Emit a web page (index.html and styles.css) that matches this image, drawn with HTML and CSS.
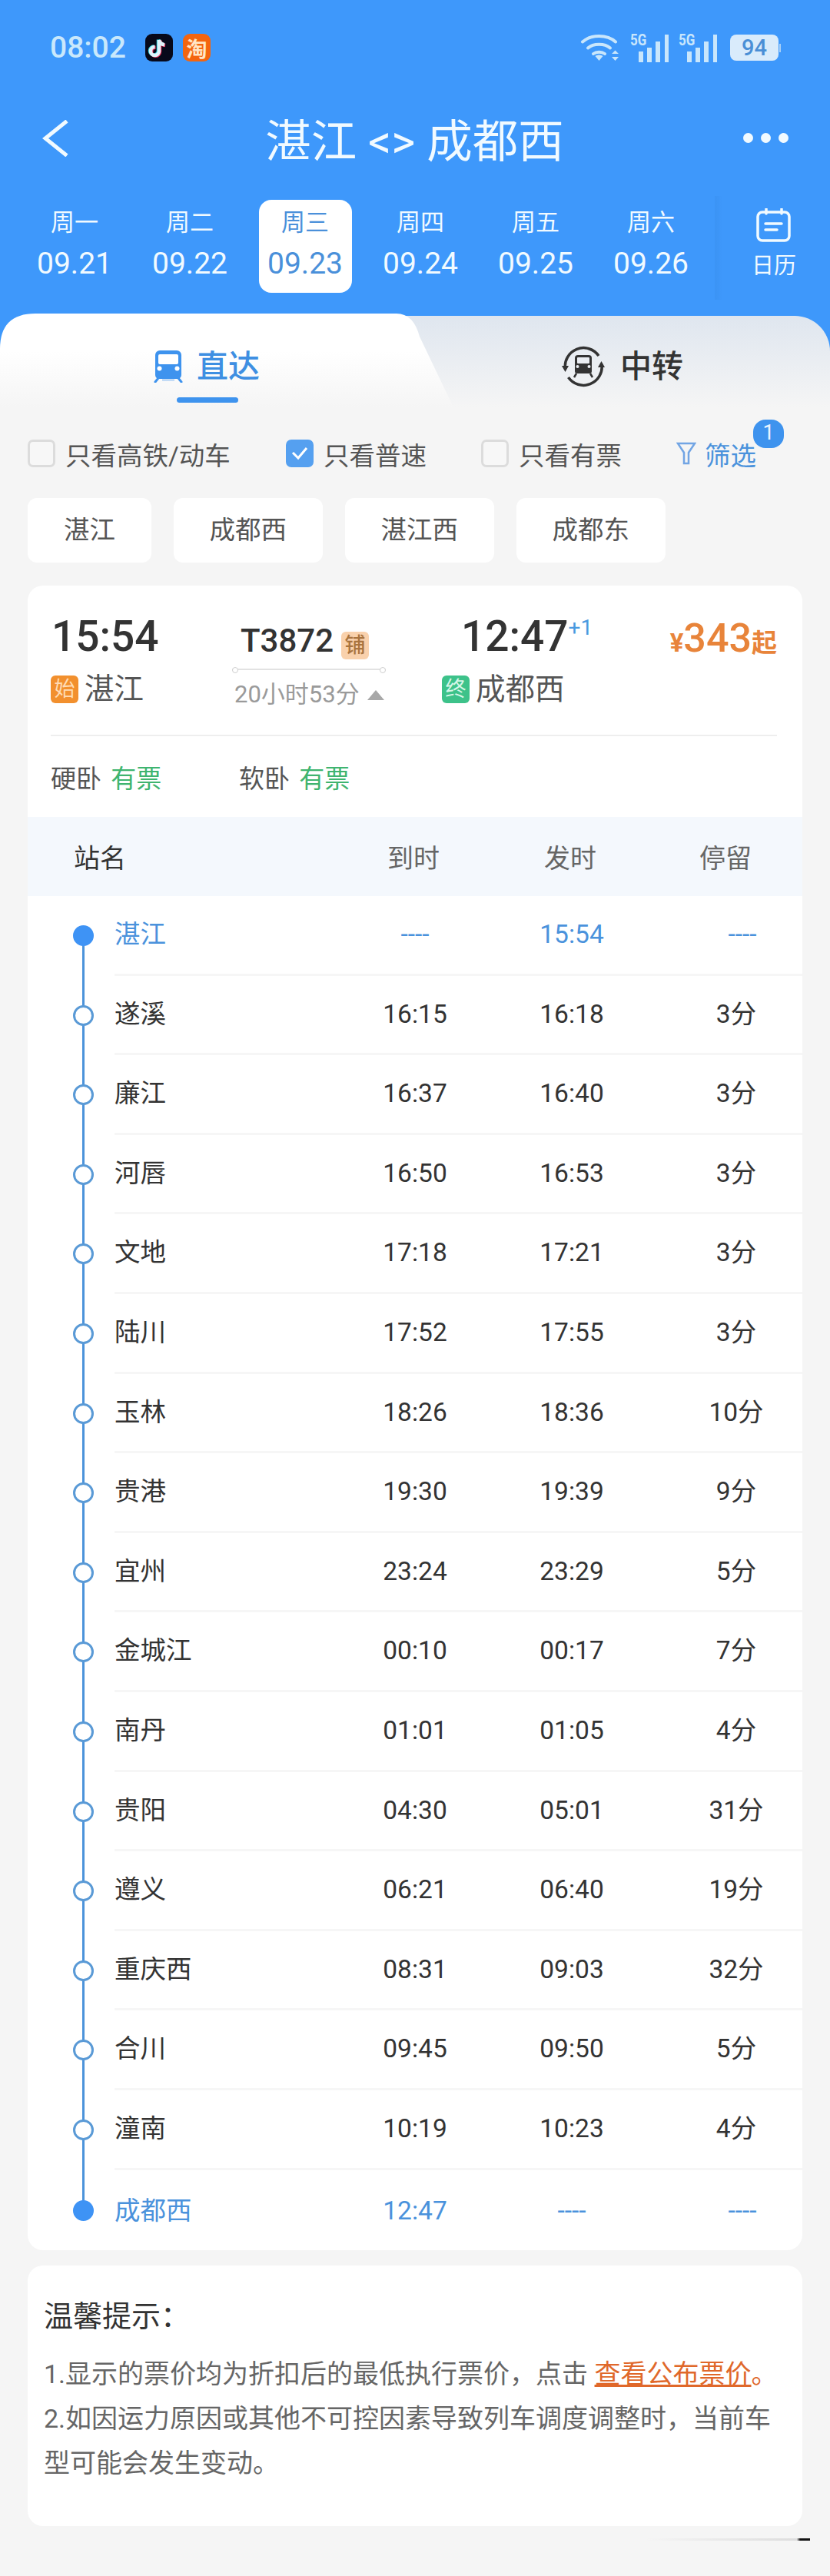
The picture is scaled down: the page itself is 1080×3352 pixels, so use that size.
FILE: index.html
```html
<!DOCTYPE html>
<html lang="zh-CN">
    <head>
        <meta charset="UTF-8" />
        <meta name="viewport" content="width=device-width, initial-scale=1.0" />
        <title>湛江 &lt;&gt; 成都西</title>
        <link rel="stylesheet" href="styles.css">
    </head>
    <body>
        <header class="top">
            <div class="status">
                <span class="clock">08:02</span>
                <span class="app app-tiktok">
                    <svg width="36" height="36" viewBox="0 0 36 36" fill="none" stroke-width="4.5">
                        <path d="M18 8v14.500a5.500 5.500 0 1 1-5.500-5.500M18 8c.8 3.600 3.400 5.800 7 6.200" stroke="#37d5e4" transform="translate(-1 -.5)" />
                        <path d="M18 8v14.500a5.500 5.500 0 1 1-5.500-5.500M18 8c.8 3.600 3.400 5.800 7 6.200" stroke="#f0345f" transform="translate(1 .8)" />
                        <path d="M18 8v14.500a5.500 5.500 0 1 1-5.500-5.500M18 8c.8 3.600 3.400 5.800 7 6.200" stroke="#dff3fb" />
                    </svg>
                </span>
                <span class="app app-taobao">淘</span>
                <span class="status-right">
                    <svg class="wifi" width="52" height="38" viewBox="0 0 52 38" fill="none" stroke="#c9e6fb" stroke-width="4" stroke-linecap="round">
                        <path d="M3 11.500C14 1.500 35 1.500 46 11.500" />
                        <path d="M10 19.500C17 13 32 13 39 19.500" />
                        <path d="M17 27C21 24 28 24 32 27" />
                        <path d="M19.500 30l5 6 5-6c-3-2-7-2-10 0z" fill="#c9e6fb" stroke="none" />
                        <path d="M41 27l4.500-4.500 4.500 4.500zM41 31h9l-4.500 5z" fill="#c9e6fb" stroke="none" />
                    </svg>
                    <span class="signal">
                        <em>5G</em>
                        <i class="bar bar-1"></i><i class="bar bar-2"></i><i class="bar bar-3"></i><i class="bar bar-4"></i>
                    </span>
                    <span class="signal">
                        <em>5G</em>
                        <i class="bar bar-1"></i><i class="bar bar-2"></i><i class="bar bar-3"></i><i class="bar bar-4"></i>
                    </span>
                    <span class="battery">94</span>
                </span>
            </div>

            <nav class="nav">
                <svg class="back" width="34" height="48" viewBox="0 0 34 48" fill="none" stroke="#f1faff" stroke-width="5">
                    <path d="M32 1.500L4 24l28 22.500" />
                </svg>
                <h1 class="title">湛江 &lt;&gt; 成都西</h1>
                <span class="more"><i></i><i></i><i></i></span>
            </nav>

            <div class="dates">
                <div class="date"><span class="week">周一</span><span class="day">09.21</span></div>
                <div class="date"><span class="week">周二</span><span class="day">09.22</span></div>
                <div class="date date-on"><span class="week">周三</span><span class="day">09.23</span></div>
                <div class="date"><span class="week">周四</span><span class="day">09.24</span></div>
                <div class="date"><span class="week">周五</span><span class="day">09.25</span></div>
                <div class="date"><span class="week">周六</span><span class="day">09.26</span></div>
                <div class="calendar">
                    <svg width="46" height="44" viewBox="0 0 46 44" fill="none" stroke="#f1faff" stroke-width="3.500" stroke-linecap="round">
                        <rect x="2" y="5" width="41" height="37" rx="6" />
                        <path d="M13 1v6M33 1v6M12 20h21M12 28h15" />
                    </svg>
                    <span>日历</span>
                </div>
            </div>
        </header>

        <section class="tabs">
            <div class="tab tab-on">
                <svg width="38" height="42" viewBox="0 0 38 42">
                    <path d="M8 0h22a6 6 0 0 1 6 6v26a5 5 0 0 1-5 5H7a5 5 0 0 1-5-5V6a6 6 0 0 1 6-6z" fill="#3e93ee" />
                    <rect x="6" y="5" width="26" height="13" rx="2" fill="#fff" />
                    <circle cx="7.500" cy="23.500" r="3" fill="#fff" />
                    <circle cx="30.500" cy="23.500" r="3" fill="#fff" />
                    <path d="M6 36l-4 5M32 36l4 5" stroke="#3e93ee" stroke-width="3" stroke-linecap="round" />
                    <path d="M11 38.500h16" stroke="#a9cdf4" stroke-width="2" />
                </svg>
                <span>直达</span>
            </div>
            <div class="tab tab-off">
                <svg width="56" height="54" viewBox="0 0 56 54">
                    <g fill="none" stroke="#333" stroke-width="3.500">
                        <path d="M4.500 30A24 24 0 0 1 48 13" />
                        <path d="M52 24A24 24 0 0 1 8.500 41" />
                    </g>
                    <path d="M0 26l9 0-4.500 8zM56 28l-9 0 4.500-8z" fill="#333" />
                    <path d="M21 12h14a4 4 0 0 1 4 4v17a3 3 0 0 1-3 3H20a3 3 0 0 1-3-3V16a4 4 0 0 1 4-4z" fill="#333" />
                    <rect x="20" y="15" width="16" height="8" rx="1" fill="#eaedf2" />
                    <circle cx="20.500" cy="27" r="2" fill="#eaedf2" />
                    <circle cx="35.500" cy="27" r="2" fill="#eaedf2" />
                    <path d="M19 36l-3 5M37 36l3 5" stroke="#333" stroke-width="2.500" />
                </svg>
                <span>中转</span>
            </div>
        </section>

        <div class="filters">
            <label class="check"><i class="box"></i>只看高铁/动车</label>
            <label class="check check-two">
                <i class="box box-on">
                    <svg width="22" height="18" viewBox="0 0 22 18" fill="none" stroke="#fff" stroke-width="3">
                        <path d="M2 8l7 7L20 2" />
                    </svg>
                </i>只看普速
            </label>
            <label class="check check-three"><i class="box"></i>只看有票</label>
            <span class="screen">
                <svg width="26" height="30" viewBox="0 0 26 30" fill="none" stroke="#72a5e4" stroke-width="2.500">
                    <path d="M2 2h22l-8 12v14h-6V14z" />
                </svg>
                筛选<b class="badge">1</b>
            </span>
        </div>

        <div class="chips">
            <span class="chip">湛江</span>
            <span class="chip">成都西</span>
            <span class="chip">湛江西</span>
            <span class="chip">成都东</span>
        </div>

        <main class="card">
            <div class="summary">
                <div class="leg">
                    <div class="time">15:54</div>
                    <div class="place"><i class="tag tag-start">始</i>湛江</div>
                </div>
                <div class="train">
                    <div class="train-no">T3872<i class="tag tag-berth">铺</i></div>
                    <div class="train-line"></div>
                    <div class="train-time">20小时53分<i class="up"></i></div>
                </div>
                <div class="leg leg-end">
                    <div class="time">12:47<sup>+1</sup></div>
                    <div class="place"><i class="tag tag-end">终</i>成都西</div>
                </div>
                <div class="price"><small>¥</small>343<small>起</small></div>
            </div>
            <div class="seats">
                <span class="seat">硬卧 <b>有票</b></span>
                <span class="seat">软卧 <b>有票</b></span>
            </div>

            <div class="table-head">
                <span class="head-name">站名</span>
                <span>到时</span>
                <span>发时</span>
                <span>停留</span>
            </div>

            <div class="row row-on row-first"><span class="rail"><i class="dot"></i></span><span class="name">湛江</span><span class="cell">----</span><span class="cell">15:54</span><span class="cell stop dash">----</span></div>
            <div class="row"><span class="rail"><i class="dot"></i></span><span class="name">遂溪</span><span class="cell">16:15</span><span class="cell">16:18</span><span class="cell stop">3分</span></div>
            <div class="row"><span class="rail"><i class="dot"></i></span><span class="name">廉江</span><span class="cell">16:37</span><span class="cell">16:40</span><span class="cell stop">3分</span></div>
            <div class="row"><span class="rail"><i class="dot"></i></span><span class="name">河唇</span><span class="cell">16:50</span><span class="cell">16:53</span><span class="cell stop">3分</span></div>
            <div class="row"><span class="rail"><i class="dot"></i></span><span class="name">文地</span><span class="cell">17:18</span><span class="cell">17:21</span><span class="cell stop">3分</span></div>
            <div class="row"><span class="rail"><i class="dot"></i></span><span class="name">陆川</span><span class="cell">17:52</span><span class="cell">17:55</span><span class="cell stop">3分</span></div>
            <div class="row"><span class="rail"><i class="dot"></i></span><span class="name">玉林</span><span class="cell">18:26</span><span class="cell">18:36</span><span class="cell stop">10分</span></div>
            <div class="row"><span class="rail"><i class="dot"></i></span><span class="name">贵港</span><span class="cell">19:30</span><span class="cell">19:39</span><span class="cell stop">9分</span></div>
            <div class="row"><span class="rail"><i class="dot"></i></span><span class="name">宜州</span><span class="cell">23:24</span><span class="cell">23:29</span><span class="cell stop">5分</span></div>
            <div class="row"><span class="rail"><i class="dot"></i></span><span class="name">金城江</span><span class="cell">00:10</span><span class="cell">00:17</span><span class="cell stop">7分</span></div>
            <div class="row"><span class="rail"><i class="dot"></i></span><span class="name">南丹</span><span class="cell">01:01</span><span class="cell">01:05</span><span class="cell stop">4分</span></div>
            <div class="row"><span class="rail"><i class="dot"></i></span><span class="name">贵阳</span><span class="cell">04:30</span><span class="cell">05:01</span><span class="cell stop">31分</span></div>
            <div class="row"><span class="rail"><i class="dot"></i></span><span class="name">遵义</span><span class="cell">06:21</span><span class="cell">06:40</span><span class="cell stop">19分</span></div>
            <div class="row"><span class="rail"><i class="dot"></i></span><span class="name">重庆西</span><span class="cell">08:31</span><span class="cell">09:03</span><span class="cell stop">32分</span></div>
            <div class="row"><span class="rail"><i class="dot"></i></span><span class="name">合川</span><span class="cell">09:45</span><span class="cell">09:50</span><span class="cell stop">5分</span></div>
            <div class="row"><span class="rail"><i class="dot"></i></span><span class="name">潼南</span><span class="cell">10:19</span><span class="cell">10:23</span><span class="cell stop">4分</span></div>
            <div class="row row-on row-last"><span class="rail"><i class="dot"></i></span><span class="name">成都西</span><span class="cell">12:47</span><span class="cell">----</span><span class="cell stop dash">----</span></div>
        </main>

        <section class="tips">
            <h2 class="tips-title">温馨提示：</h2>
            <p>1.显示的票价均为折扣后的最低执行票价，点击 <a class="tips-link">查看公布票价</a><span class="tips-end">。</span></p>
            <p>2.如因运力原因或其他不可控因素导致列车调度调整时，当前车型可能会发生变动。</p>
        </section>

        <div class="smudge"></div>
    </body>
</html>
```

FILE: styles.css
```css
* {
    margin: 0;
    padding: 0;
    box-sizing: border-box;
}
html,
body {
    width: 1080px;
    height: 3352px;
    overflow: hidden;
    background-color: #f5f5f5;
}
body {
    position: relative;
    font-family: Roboto, "Noto Sans CJK SC", sans-serif;
    color: #333;
}
i,
em {
    font-style: normal;
}

/* blue header */
.top {
    height: 408px;
    background-color: #3e98fb;
    color: #f1faff;
}
.status {
    height: 124px;
    padding: 0 67px 0 65px;
    display: flex;
    align-items: center;
}
.clock {
    font-size: 39px;
    font-weight: 500;
    color: #c9e8fb;
    margin-right: 25px;
}
.app {
    width: 36px;
    height: 36px;
    border-radius: 9px;
    margin-right: 13px;
    overflow: hidden;
    display: flex;
    align-items: center;
    justify-content: center;
}
.app-tiktok {
    background-color: #07091a;
}
.app-taobao {
    background-color: #f4650f;
    color: #ffe6c6;
    font-size: 27px;
    font-weight: 700;
}
.status-right {
    margin-left: auto;
    display: flex;
    align-items: center;
    gap: 14px;
}
.signal {
    position: relative;
    width: 49px;
    height: 37px;
    display: flex;
    align-items: flex-end;
    justify-content: flex-end;
    gap: 5.600px;
    & em {
        position: absolute;
        top: -2px;
        left: -1px;
        font-size: 20px;
        line-height: 20px;
        font-weight: 700;
        color: #c9e6fb;
        transform: scaleX(0.85);
        transform-origin: left;
    }
}
.bar {
    width: 5.500px;
    background-color: #c9e6fb;
}
.bar-1 {
    height: 14px;
}
.bar-2 {
    height: 19px;
}
.bar-3 {
    height: 27px;
}
.bar-4 {
    height: 36px;
}
.battery {
    position: relative;
    width: 63px;
    height: 34px;
    margin-left: 3px;
    border-radius: 8px;
    background-color: #d9ebfb;
    color: #4a8fd6;
    font-size: 29px;
    font-weight: 500;
    line-height: 34px;
    text-align: center;
    &::after {
        content: "";
        position: absolute;
        top: 12px;
        right: -3px;
        width: 2px;
        height: 11px;
        background-color: #a9d0f7;
    }
}

.nav {
    position: relative;
    height: 122px;
    display: flex;
    align-items: center;
    justify-content: center;
}
.back {
    position: absolute;
    left: 55px;
    top: 32px;
}
.title {
    font-size: 59.500px;
    font-weight: 400;
    line-height: 70px;
    margin-left: -1px;
}
.more {
    position: absolute;
    right: 54px;
    top: 49px;
    display: flex;
    gap: 10px;
    & i {
        width: 13px;
        height: 13px;
        border-radius: 50%;
        background-color: #f1faff;
    }
}

.dates {
    position: relative;
    height: 162px;
    padding: 14px 0 0 22px;
    display: flex;
    align-items: flex-start;
}
.date {
    width: 150px;
    height: 121px;
    padding-top: 10px;
    display: flex;
    flex-direction: column;
    align-items: center;
    gap: 8px;
}
.date-on {
    position: relative;
    color: #4a90da;
    &::before {
        content: "";
        position: absolute;
        top: 0;
        left: 15px;
        width: 121px;
        height: 121px;
        border-radius: 16px;
        background-color: #fff;
    }
    & span {
        position: relative;
    }
}
.week {
    font-size: 31px;
    line-height: 40px;
}
.day {
    font-size: 39px;
    line-height: 50px;
}
.calendar {
    position: absolute;
    top: 9px;
    left: 930px;
    width: 150px;
    height: 135px;
    display: flex;
    flex-direction: column;
    align-items: center;
    font-size: 29px;
    line-height: 40px;
    background: linear-gradient(90deg, #3b93f4, #3e98fb 10px);
    padding: 16px 0 0 4px;
    gap: 11px;
}

/* tabs */
.tabs {
    position: relative;
    height: 122px;
    display: grid;
    grid-template-columns: 540px 540px;
    background-color: #3e98fb;
    &::before {
        content: "";
        position: absolute;
        inset: 3px 0 0 0;
        border-radius: 46px 46px 0 0;
        background: linear-gradient(#dfe6ef, #f5f5f5);
    }
}
.tab {
    position: relative;
    display: flex;
    align-items: center;
    font-size: 41px;
    line-height: 54px;
    font-weight: 500;
}
.tab-on {
    padding: 16px 0 0 200px;
    gap: 18px;
    color: #3e8fe2;
    &::before {
        content: "";
        position: absolute;
        top: 0;
        left: 0;
        width: 600px;
        height: 122px;
        background: linear-gradient(#fff 40%, #f5f5f5);
        clip-path: path("M0 122V46Q0 0 46 0H516Q538 0 546 30L590 122Z");
    }
    &::after {
        content: "";
        position: absolute;
        left: 230px;
        top: 109px;
        width: 80px;
        height: 7px;
        border-radius: 4px;
        background-color: #3e93ee;
    }
    & > * {
        position: relative;
    }
}
.tab-off {
    padding: 16px 0 0 191px;
    gap: 20px;
    & > * {
        position: relative;
    }
}

/* filters */
.filters {
    position: relative;
    height: 118px;
    padding: 2px 0 0 36px;
    display: flex;
    align-items: center;
    font-size: 33.500px;
    color: #555;
}
.check {
    display: flex;
    align-items: center;
    gap: 13px;
    width: 336px;
}
.check-two {
    width: 254px;
}
.check-three {
    width: 257px;
}
.box {
    width: 36px;
    height: 36px;
    border: 3px solid #dcdcdc;
    border-radius: 7px;
    background-color: #f7f7f7;
    display: flex;
    align-items: center;
    justify-content: center;
}
.box-on {
    border: 0;
    background-color: #55a0f0;
}
.screen {
    position: relative;
    display: flex;
    align-items: center;
    gap: 11px;
    color: #4a92dc;
    margin-left: -3px;
}
.badge {
    position: absolute;
    top: -20px;
    left: 100px;
    width: 40px;
    height: 37px;
    border-radius: 16px;
    background-color: #3e93ee;
    color: #e9f4ff;
    font-size: 27px;
    font-weight: 400;
    line-height: 35px;
    text-align: center;
}
.chips {
    height: 84px;
    padding-left: 36px;
    display: flex;
    gap: 28.500px;
}
.chip {
    padding: 0 47px;
    border-radius: 12px;
    background-color: #fff;
    color: #555;
    font-size: 33.500px;
    line-height: 84px;
}

/* main card */
.card {
    margin: 30px 36px 0;
    height: 2166px;
    border-radius: 20px;
    background-color: #fff;
    overflow: hidden;
}
.summary {
    height: 196px;
    margin: 0 33px 0 30px;
    padding-top: 36px;
    display: grid;
    grid-template-columns: 236px 273px 285px 1fr;
    border-bottom: 2px solid #eee;
}
.time {
    height: 60px;
    font-size: 55px;
    font-weight: 500;
    line-height: 60px;
    padding-left: 1px;
}
.time sup {
    position: absolute;
    margin-top: 4px;
    font-size: 28px;
    font-weight: 400;
    line-height: 30px;
    color: #4a9ae0;
}
.leg-end .time {
    padding-left: 25px;
}
.place {
    margin-top: 17px;
    display: flex;
    align-items: center;
    gap: 8px;
    font-size: 38.500px;
    line-height: 44px;
    color: #555;
}
.tag {
    width: 36px;
    height: 36px;
    border-radius: 6px;
    font-size: 27px;
    line-height: 36px;
    text-align: center;
}
.tag-start {
    background-color: #f2902e;
    color: #ffdcb5;
}
.tag-end {
    background-color: #3dc28a;
    color: #d6f6e8;
}
.tag-berth {
    margin-left: 10px;
    background-color: #f9d1ac;
    color: #a9743f;
}
.train-no {
    padding: 23px 0 0 11px;
    height: 60px;
    display: flex;
    align-items: flex-end;
    font-size: 42px;
    font-weight: 500;
    line-height: 48px;
}
.train-line {
    position: relative;
    margin-top: 12px;
    width: 200px;
    height: 2px;
    background-color: #e2e2e2;
    &::before,
    &::after {
        content: "";
        position: absolute;
        top: -2px;
        width: 6px;
        height: 6px;
        border: 1px solid #cfcfcf;
        border-radius: 50%;
        background-color: #fff;
    }
    &::before {
        left: 0;
    }
    &::after {
        right: 0;
    }
}
.train-time {
    margin: 12px 0 0 3px;
    display: flex;
    align-items: center;
    font-size: 31px;
    line-height: 40px;
    color: #9a9a9a;
}
.up {
    margin-left: 10px;
    width: 0;
    height: 0;
    border-left: 11px solid transparent;
    border-right: 11px solid transparent;
    border-bottom: 13px solid #a8a8a8;
}
.price {
    height: 60px;
    text-align: right;
    font-size: 52px;
    font-weight: 500;
    line-height: 66px;
    color: #e8843a;
    white-space: nowrap;
    margin-left: -20px;
    & small {
        font-size: 33px;
        font-weight: 700;
    }
}
.seats {
    height: 105px;
    padding-left: 30px;
    display: flex;
    align-items: center;
    gap: 44px;
}
.seat {
    width: 201px;
    font-size: 33px;
    color: #555;
    & b {
        font-weight: 400;
        color: #3fb46f;
        margin-left: 4px;
    }
}

/* timetable */
.table-head,
.row {
    display: grid;
    grid-template-columns: 113px 289px 204px 204px 198px;
    text-align: center;
    align-items: center;
}
.table-head {
    height: 103px;
    grid-template-columns: 400px 204px 204px 200px;
    background-color: #f4f8fd;
    font-size: 34px;
    color: #666;
}
.head-name {
    padding-left: 60px;
    text-align: left;
    color: #333;
}
.row {
    height: 103.600px;
    align-items: stretch;
    font-size: 33.500px;
}
.row > * {
    display: block;
    line-height: 100.600px;
    border-bottom: 3px solid #f6f6f6;
}
.row > .rail {
    position: relative;
    border-bottom: 0;
    &::before {
        content: "";
        position: absolute;
        left: 71px;
        top: 0;
        bottom: 0;
        width: 3px;
        background-color: #4c93da;
    }
}
.dot {
    position: absolute;
    left: 59px;
    top: 38px;
    width: 27px;
    height: 27px;
    border: 3px solid #5a9ad6;
    border-radius: 50%;
    background-color: #fff;
}
.name {
    text-align: left;
}
.stop {
    padding-left: 26px;
}
.stop.dash {
    padding-left: 42px;
}
.row-on {
    color: #4a92dc;
    & .dot {
        border: 0;
        background-color: #3e93f5;
    }
}
.row-first .rail::before {
    top: 52px;
}
.row-last {
    height: 105px;
    & > * {
        border-bottom: 0;
        line-height: 105px;
    }
    & .rail::before {
        bottom: 53px;
    }
    & .dot {
        top: 39px;
    }
}

/* tips */
.tips {
    margin: 20px 36px 0;
    height: 339px;
    padding: 41px 20px 0 21px;
    border-radius: 20px;
    background-color: #fff;
    color: #666;
    font-size: 34px;
    line-height: 58px;
}
.tips-title {
    margin-bottom: 21px;
    font-size: 38px;
    font-weight: 400;
    line-height: 50px;
    color: #333;
}
.tips-link {
    color: #e0682a;
    text-decoration: underline;
}
.tips-end {
    color: #e0682a;
}
.smudge {
    position: absolute;
    left: 840px;
    top: 3303px;
    width: 214px;
    height: 3px;
    background: linear-gradient(90deg, #f5f5f5, #ddd 92%, #111 94%);
}
```
